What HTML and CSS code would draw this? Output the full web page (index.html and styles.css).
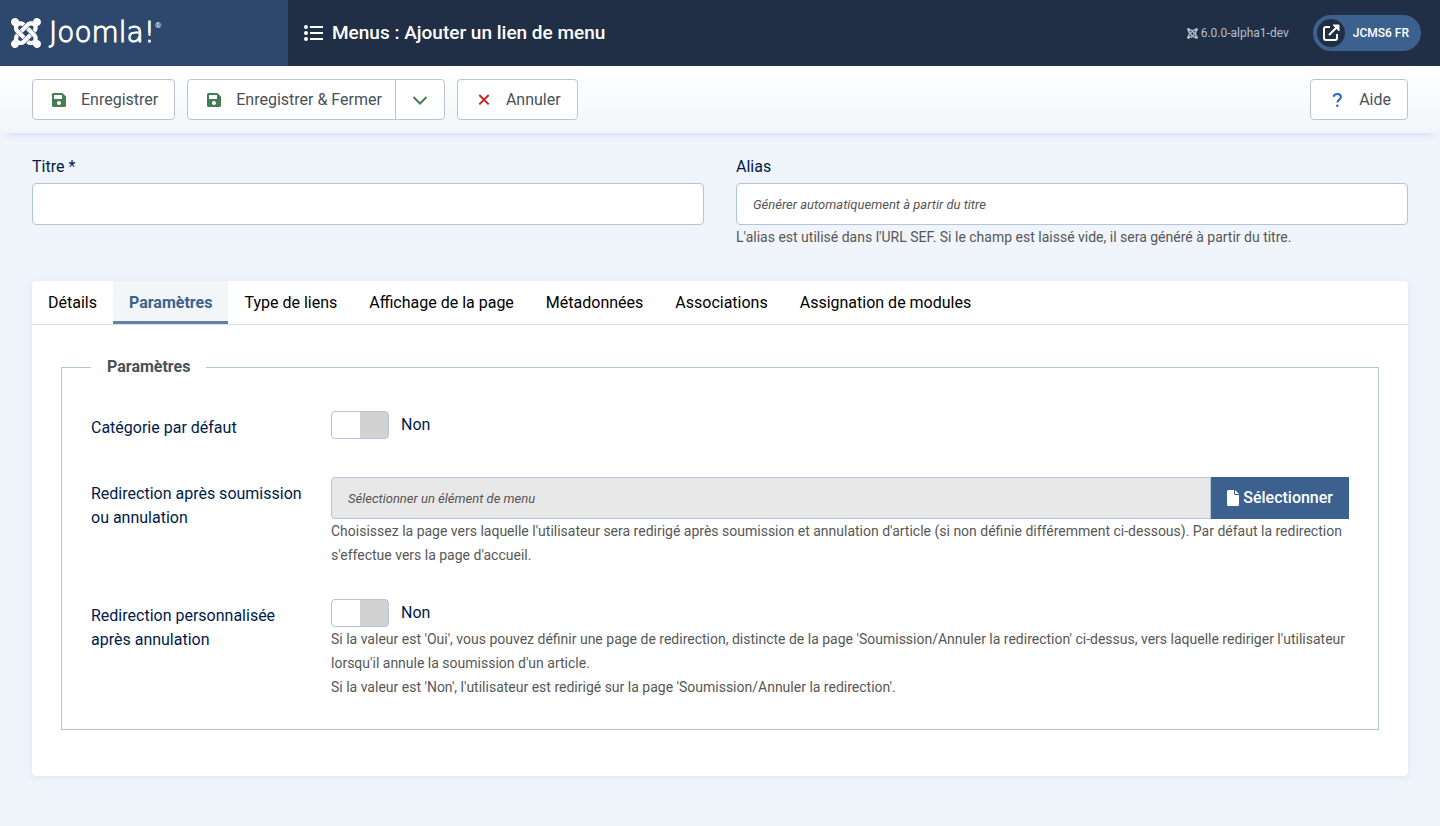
FILE: index.html
```html
<!DOCTYPE html>
<html lang="fr">
<head>
<meta charset="utf-8">
<meta name="viewport" content="width=device-width, initial-scale=1">
<title>Menus : Ajouter un lien de menu</title>
<link rel="stylesheet" href="styles.css">
</head>
<body>
<svg class="defs" width="0" height="0" aria-hidden="true">
  <symbol id="joomla" viewBox="0 32 448 448"><path d="M.6 92.1C.6 58.8 27.4 32 60.4 32c30 0 54.5 21.9 59.2 50.2 32.6-7.6 67.1.6 96.5 30l-44.3 44.3c-20.5-20.5-42.6-16.3-55.4-3.5-14.3 14.3-14.3 37.9 0 52.2l99.5 99.5-44 44.3c-87.7-87.2-49.7-49.7-99.8-99.7-26.8-26.5-35-64.8-24.8-98.9C20.4 144.6.6 120.7.6 92.1zm129.5 116.4l44.3 44.3c10-10 89.7-89.7 99.7-99.8 14.3-14.3 37.6-14.3 51.9 0 12.8 12.8 17 35-3.5 55.4l44 44.3c31.2-31.2 38.5-67.6 28.9-101.2 29.2-4.1 51.9-29.2 51.9-59.5 0-33.2-26.8-60.1-59.8-60.1-30.3 0-55.4 22.5-59.5 51.6-33.8-9.9-71.7-1.5-98.3 25.1-18.3 19.1-71.1 71.5-99.6 99.9zm266.3 152.2c8.2-32.7-.9-68.5-26.3-93.9-11.8-12.2 5 4.7-99.5-99.7l-44.3 44.3 99.7 99.7c14.3 14.3 14.3 37.6 0 51.9-12.8 12.8-35 17-55.4-3.5l-44 44.3c27.6 30.2 68 38.8 102.7 28 5.5 27.4 29.7 48.1 58.9 48.1 33 0 59.8-26.8 59.8-60.1 0-30.2-22.5-55-51.6-59.1zm-84.3-53.1l-44-44.3c-87 86.4-50.4 50.4-99.7 99.8-14.3 14.3-37.6 14.3-51.9 0-13.1-13.4-16.9-35.3 3.2-55.4l-44-44.3c-30.2 30.2-38 65.2-29.5 98.3-26.7 6-46.2 29.9-46.2 58.2C0 453.2 26.8 480 59.8 480c28.6 0 52.5-19.8 58.6-46.7 32.7 8.2 68.5-.6 94.2-26 32.1-32 12.2-12.4 99.5-99.7z"/></symbol>
  <symbol id="save" viewBox="0 32 448 448"><path d="M433.941 129.941l-83.882-83.882A48 48 0 0 0 316.118 32H48C21.49 32 0 53.49 0 80v352c0 26.51 21.49 48 48 48h352c26.51 0 48-21.49 48-48V163.882a48 48 0 0 0-14.059-33.941zM224 416c-35.346 0-64-28.654-64-64 0-35.346 28.654-64 64-64s64 28.654 64 64c0 35.346-28.654 64-64 64zm96-304.52V212c0 6.627-5.373 12-12 12H76c-6.627 0-12-5.373-12-12V108c0-6.627 5.373-12 12-12h228.52c3.183 0 6.235 1.264 8.485 3.515l3.480 3.480A11.996 11.996 0 0 1 320 111.480z"/></symbol>
</svg>

<header class="header">
  <a class="brand" href="#">
    <svg class="brand-mark" aria-hidden="true"><use href="#joomla"/></svg>
    <span class="brand-name">Joomla!</span><span class="brand-reg">®</span>
  </a>
  <div class="header-main">
    <h1 class="page-title">
      <svg class="title-icon" viewBox="0 0 20 18" aria-hidden="true"><circle cx="2" cy="3" r="2"/><circle cx="2" cy="9" r="2"/><circle cx="2" cy="15" r="2"/><path d="M6 2h13v2H6zM6 8h13v2H6zM6 14h13v2H6z"/></svg>
      Menus : Ajouter un lien de menu
    </h1>
    <div class="header-items">
      <span class="version"><svg class="version-icon" aria-hidden="true"><use href="#joomla"/></svg>6.0.0-alpha1-dev</span>
      <a class="site-link" href="#">
        <span class="site-icon"><svg viewBox="0 0 18 18" aria-hidden="true"><path d="M8 3H4a2 2 0 0 0-2 2v9a2 2 0 0 0 2 2h9a2 2 0 0 0 2-2v-4M7 11l7-7" fill="none" stroke="#fff" stroke-width="2"/><path d="M11 1h6v6z" fill="#fff" stroke="#fff" stroke-linejoin="round"/></svg></span>
        JCMS6 FR
      </a>
    </div>
  </div>
</header>

<div class="toolbar">
  <button type="button" class="btn"><svg class="icon green" aria-hidden="true"><use href="#save"/></svg>Enregistrer</button>
  <div class="btn-group">
    <button type="button" class="btn"><svg class="icon green" aria-hidden="true"><use href="#save"/></svg>Enregistrer &amp; Fermer</button>
    <button type="button" class="btn btn-toggle" aria-label="Plus d'actions"><svg viewBox="0 0 16 16" aria-hidden="true"><path d="M1.500 5l6.500 6.500L14.500 5" fill="none" stroke="#457d54" stroke-width="2"/></svg></button>
  </div>
  <button type="button" class="btn"><svg class="icon" viewBox="0 0 14 14" aria-hidden="true"><path d="M2.300 2l9.400 9.400M11.700 2l-9.400 9.400" fill="none" stroke="#c52827" stroke-width="2"/></svg>Annuler</button>
  <button type="button" class="btn btn-help"><svg class="icon" viewBox="0 0 14 14" aria-hidden="true"><path d="M3.500 3.800C3.900 2 5.200 1 7.200 1c2.200 0 3.700 1.100 3.700 2.900 0 2.700-3.500 2.800-3.500 5.600" fill="none" stroke="#2a69b8" stroke-width="2"/><circle cx="7.300" cy="12.700" r="1.300" fill="#2a69b8"/></svg>Aide</button>
</div>

<main class="content">
  <form>
    <div class="title-fields">
      <div>
        <label class="field-label" for="title">Titre *</label>
        <input class="text-input" id="title" type="text">
      </div>
      <div>
        <label class="field-label" for="alias">Alias</label>
        <input class="text-input" id="alias" type="text" placeholder="Générer automatiquement à partir du titre">
        <p class="help">L'alias est utilisé dans l'URL SEF. Si le champ est laissé vide, il sera généré à partir du titre.</p>
      </div>
    </div>

    <div class="card">
      <div class="tabs" role="tablist">
        <button type="button" class="tab" role="tab">Détails</button>
        <button type="button" class="tab active" role="tab" aria-selected="true">Paramètres</button>
        <button type="button" class="tab" role="tab">Type de liens</button>
        <button type="button" class="tab" role="tab">Affichage de la page</button>
        <button type="button" class="tab" role="tab">Métadonnées</button>
        <button type="button" class="tab" role="tab">Associations</button>
        <button type="button" class="tab" role="tab">Assignation de modules</button>
      </div>
      <div class="panel">
        <fieldset class="options">
          <legend>Paramètres</legend>
          <div class="row">
            <label class="row-label" for="default-cat">Catégorie par défaut</label>
            <div class="switch-line"><input class="switch" id="default-cat" type="checkbox" role="switch"><span>Non</span></div>
          </div>
          <div class="row">
            <label class="row-label" for="redirect">Redirection après soumission ou annulation</label>
            <div>
              <div class="picker">
                <input class="text-input" id="redirect" type="text" placeholder="Sélectionner un élément de menu" readonly>
                <button type="button" class="select-btn"><svg viewBox="0 0 12 16" aria-hidden="true"><path d="M1.500 0H7v4a1 1 0 0 0 1 1h4v9.500a1.500 1.500 0 0 1-1.500 1.500h-9A1.500 1.500 0 0 1 0 14.500v-13A1.500 1.500 0 0 1 1.500 0zM8 0l4 4H8z"/></svg>Sélectionner</button>
              </div>
              <p class="help">Choisissez la page vers laquelle l'utilisateur sera redirigé après soumission et annulation d'article (si non définie différemment ci-dessous). Par défaut la redirection s'effectue vers la page d'accueil.</p>
            </div>
          </div>
          <div class="row">
            <label class="row-label" for="custom-redirect">Redirection personnalisée après annulation</label>
            <div>
              <div class="switch-line"><input class="switch" id="custom-redirect" type="checkbox" role="switch"><span>Non</span></div>
              <p class="help">Si la valeur est 'Oui', vous pouvez définir une page de redirection, distincte de la page 'Soumission/Annuler la redirection' ci-dessus, vers laquelle rediriger l'utilisateur lorsqu'il annule la soumission d'un article.<br>Si la valeur est 'Non', l'utilisateur est redirigé sur la page 'Soumission/Annuler la redirection'.</p>
            </div>
          </div>
        </fieldset>
      </div>
    </div>
  </form>
</main>
</body>
</html>
```
FILE: styles.css
```css
* { box-sizing: border-box; }
body {
  margin: 0;
  min-height: 100vh;
  background: #f0f4fb;
  color: #001b4c;
  font: 16px/24px Roboto, "Liberation Sans", sans-serif;
}
button, input { font: inherit; }
button { cursor: pointer; }
svg { flex: none; }
.defs { position: absolute; }

.header { display: flex; height: 66px; background: #202f45; color: #fff; }
.brand {
  display: flex;
  align-items: center;
  width: 288px;
  padding-left: 11px;
  background: #2d486c;
  color: #fff;
  text-decoration: none;
}
.brand-mark { width: 30px; height: 30px; fill: #fff; }
.brand-name {
  margin-left: 8px;
  font: 200 28px/32px "DejaVu Sans Light", "DejaVu Sans", sans-serif;
  -webkit-text-stroke: 1px #fff;
}
.brand-reg { align-self: flex-start; margin-top: 20px; font-size: 8px; line-height: 12px; }
.header-main {
  flex: 1;
  display: flex;
  align-items: center;
  justify-content: space-between;
  padding: 0 19px 0 16px;
}
.page-title {
  display: flex;
  align-items: center;
  gap: 8px;
  margin: 0;
  font-size: 19px;
  line-height: 24px;
  font-weight: 500;
}
.title-icon { width: 20px; height: 18px; fill: #fff; }
.header-items { display: flex; align-items: center; gap: 24px; }
.version { display: flex; align-items: center; gap: 3px; color: #b4bfcd; font-size: 12px; }
.version-icon { width: 11px; height: 11px; fill: #b4bfcd; }
.site-link {
  display: flex;
  align-items: center;
  gap: 8px;
  height: 36px;
  padding: 0 12px 0 4px;
  border-radius: 18px;
  background: #3d618f;
  color: #fff;
  font-size: 12px;
  font-weight: 500;
  text-decoration: none;
}
.site-icon { display: grid; place-items: center; width: 28px; height: 28px; border-radius: 50%; background: #202f45; }
.site-icon svg { width: 18px; height: 18px; }

.toolbar {
  display: flex;
  gap: 12px;
  padding: 13px 32px;
  background: linear-gradient(#fff, #f2f6f9);
  box-shadow: 0 4px 10px -6px #b4c3dc;
}
.btn {
  display: flex;
  align-items: center;
  height: 41px;
  padding: 0 16px 0 19px;
  border: 1px solid #b9c5d5;
  border-radius: 4px;
  background: #fff;
  color: #495057;
}
.icon { width: 14px; height: 14px; margin-right: 15px; }
.green { fill: #457d54; }
.btn-group { display: flex; }
.btn-group .btn:first-child { padding-right: 13px; border-radius: 4px 0 0 4px; }
.btn-group .btn-toggle { margin-left: -1px; padding: 0 16px; border-radius: 0 4px 4px 0; }
.btn-toggle svg { width: 16px; height: 16px; }
.btn-help { margin-left: auto; }

.content { padding: 22px 32px 50px; }
.title-fields { display: grid; grid-template-columns: 1fr 1fr; gap: 32px; margin-bottom: 32px; }
.field-label { display: block; margin-bottom: 4px; }
.text-input {
  display: block;
  width: 100%;
  height: 42px;
  padding: 0 16px;
  border: 1px solid #b2c4de;
  border-radius: 4px;
  background: #fff;
  color: #22262a;
  font-size: 13px;
}
.text-input::placeholder { color: #555; font-style: italic; opacity: 1; }
.help { margin: 0; color: #575757; font-size: 14px; line-height: 24px; }

.card { border-radius: 4px; background: #fff; box-shadow: 0 1px 8px #dfe6f1; }
.tabs { display: flex; border-bottom: 1px solid #d9e1ee; }
.tab {
  height: 43px;
  padding: 0 16px;
  border: 0;
  background: none;
  color: #000;
}
.tab:first-child { border-radius: 4px 0 0 0; }
.tab.active { background: #f2f6f9; color: #3d618f; font-weight: 700; box-shadow: inset 0 -3px #6480a6; }
.panel { padding: 30px 29px 46px; }
.options { min-width: 0; margin: 0; padding: 32px 29px 30px; border: 1px solid #b4c4d8; }
.options legend { padding: 0 16px; color: #495057; font-weight: 700; }
.row { display: grid; grid-template-columns: 216px minmax(0, 1fr); gap: 24px; margin-bottom: 32px; }
.row:first-of-type { margin-bottom: 33px; }
.row:last-child { margin-bottom: 0; }
.row-label { align-self: start; padding: 5px 0 4px; }
.switch-line { display: flex; align-items: center; gap: 12px; height: 28px; }
.switch {
  appearance: none;
  width: 58px;
  height: 28px;
  margin: 0;
  border: 1px solid #b2c4de;
  border-radius: 4px;
  background: linear-gradient(90deg, #fff 50%, #d2d2d2 50%);
}
.picker { display: flex; }
.picker .text-input { flex: 1; min-width: 0; border-radius: 4px 0 0 4px; background: #e8e8e8; }
.select-btn {
  display: flex;
  align-items: center;
  gap: 4px;
  padding: 0 16px;
  border: 0;
  background: #3d618f;
  color: #fff;
  font-weight: 500;
}
.select-btn svg { width: 12px; height: 16px; fill: #fff; }
```
